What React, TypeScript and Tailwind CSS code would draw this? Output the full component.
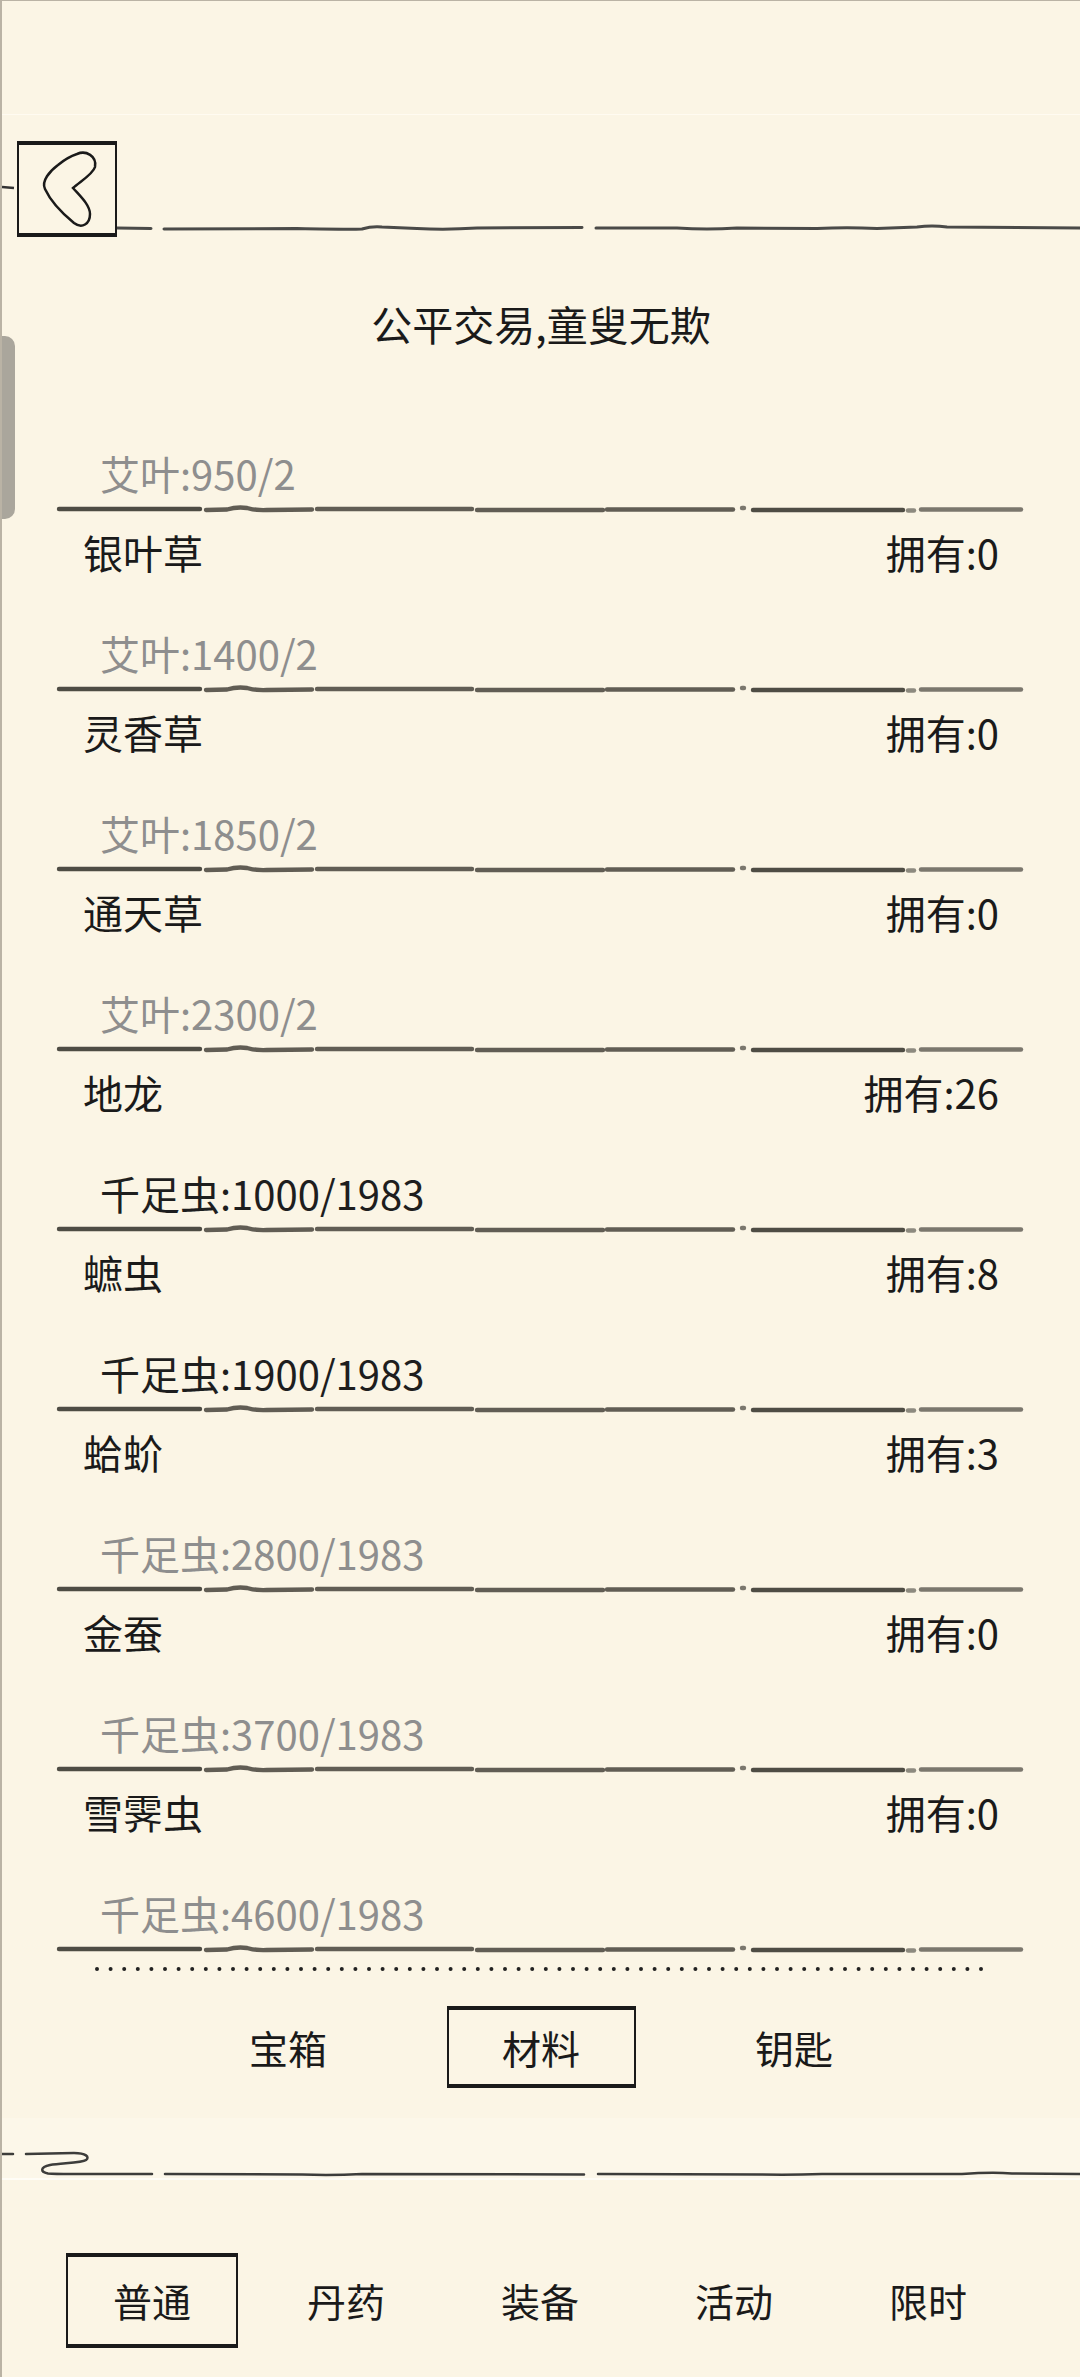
import type { ReactNode } from "react";

type Item = {
  name: string;
  owned: number;
  price: string;
  affordable: boolean;
};

const items: Item[] = [
  { name: "银叶草", owned: 0, price: "艾叶:1400/2", affordable: false },
  { name: "灵香草", owned: 0, price: "艾叶:1850/2", affordable: false },
  { name: "通天草", owned: 0, price: "艾叶:2300/2", affordable: false },
  { name: "地龙", owned: 26, price: "千足虫:1000/1983", affordable: true },
  { name: "蟅虫", owned: 8, price: "千足虫:1900/1983", affordable: true },
  { name: "蛤蚧", owned: 3, price: "千足虫:2800/1983", affordable: false },
  { name: "金蚕", owned: 0, price: "千足虫:3700/1983", affordable: false },
  { name: "雪霁虫", owned: 0, price: "千足虫:4600/1983", affordable: false },
];

// brush-stroke divider under every price line
function Divider() {
  return (
    <svg width="970" height="10" viewBox="0 0 970 10" className="block -my-[1px] blur-[0.7px]">
      <g fill="none" stroke="#45423b" strokeWidth="4.4" strokeLinecap="round">
        <path d="M4 5 L145 5" strokeOpacity="0.95" />
        <path d="M151 6 L172 5.5 Q182 2.5 192 4 Q200 6.5 212 6 L257 5.5" strokeOpacity="0.85" />
        <path d="M262 5 L417 5" strokeOpacity="0.85" />
        <path d="M422 6 L548 6" strokeOpacity="0.85" />
        <path d="M552 5.5 L678 5.5" strokeOpacity="0.85" />
        <path d="M687 4 L689 4" strokeOpacity="0.7" />
        <path d="M698 6 L848 6" strokeOpacity="0.95" />
        <path d="M853 6.5 L859 6.5" strokeOpacity="0.6" />
        <path d="M866 5.5 L966 5.5" strokeOpacity="0.7" />
      </g>
    </svg>
  );
}

function PriceLabel({ text, affordable }: { text: string; affordable: boolean }) {
  return (
    <div className="h-[90px] flex items-end pb-[12px] pl-[45px]">
      <span className={`text-[40px] leading-[40px] ${affordable ? "text-[#1e1e1e]" : "text-[#8e8e8e]"}`}>
        {text}
      </span>
    </div>
  );
}

function SketchBox({ children, className }: { children: ReactNode; className: string }) {
  return (
    <div
      className={`flex items-center justify-center border-2 border-t-[4px] border-b-[4px] border-[#1a1a1a] ${className}`}
    >
      {children}
    </div>
  );
}

export default function App() {
  return (
    <div className="relative w-[1080px] min-h-[2377px] bg-[#fbf5e5] border-t border-l-2 border-[#bab3a5] font-['Noto_Sans_CJK_SC','Noto_Sans',sans-serif] text-[#1a1a1a] overflow-hidden">
      {/* status bar area */}
      <div className="h-[113px]" />
      <div className="h-px bg-[#fffbf1]" />

      {/* header with back button */}
      <div className="flex items-start pt-[26px] h-[131px]">
        <svg width="15" height="96" viewBox="0 0 15 96" className="block">
          <path d="M0 46 L12 47" stroke="#333" strokeWidth="2.5" fill="none" />
        </svg>
        <SketchBox className="w-[100px] h-[96px] border-b-[3px]">
          <svg width="96" height="90" viewBox="0 0 96 90" className="block -mt-[4px]">
            <path
              d="M58 12 C67 8 78 14 76 25 C74 32 62 39 54 46 C61 54 71 63 71 72 C71 82 63 87 55 81 C44 72 32 60 26 47 C22 39 31 29 39 23 C45 18 52 14 58 12 Z"
              fill="none"
              stroke="#1a1a1a"
              strokeWidth="2.5"
            />
          </svg>
        </SketchBox>
        <svg width="963" height="96" viewBox="0 0 963 96" className="block">
          <g fill="none" stroke="#4a4a48" strokeWidth="3" strokeLinecap="round">
            <path d="M0 87 L34 87.5" />
            <path d="M47 88 L180 87.5 Q230 88.5 245 88 Q255 85 265 86 L300 87.5 Q330 89 360 87 L465 86.5" />
            <path d="M479 87 L560 87 Q590 89 620 87 L700 87.5 Q730 86 760 87.5 L800 86 Q815 84 830 86 L963 87" />
          </g>
        </svg>
      </div>

      {/* title */}
      <div className="mt-[53px] h-[48px] leading-[48px] text-center text-[41px]">公平交易,童叟无欺</div>

      {/* item list */}
      <div className="mt-[68px] ml-[53px] w-[970px]">
        <PriceLabel text="艾叶:950/2" affordable={false} />
        {items.map((item) => (
          <div key={item.name}>
            <Divider />
            <div className="h-[82px] flex items-center justify-between pl-[28px] pr-[26px] pb-[5px] text-[40px] leading-[48px]">
              <span>{item.name}</span>
              <span>拥有:{item.owned}</span>
            </div>
            <PriceLabel text={item.price} affordable={item.affordable} />
          </div>
        ))}
        <Divider />
      </div>

      {/* dotted separator */}
      <svg width="900" height="8" viewBox="0 0 900 8" className="block mt-[12px] ml-[92px]">
        <line
          x1="3"
          y1="4"
          x2="895"
          y2="4"
          stroke="#222"
          strokeWidth="4"
          strokeLinecap="round"
          strokeDasharray="0 13.6"
        />
      </svg>

      {/* category tabs */}
      <div className="mt-[33px] flex justify-center text-[39px]">
        <div className="w-[253px] h-[82px] flex items-center justify-center">宝箱</div>
        <div className="w-[253px] h-[82px] flex items-center justify-center">
          <SketchBox className="w-[189px] h-[82px] border-t-[3px]">材料</SketchBox>
        </div>
        <div className="w-[253px] h-[82px] flex items-center justify-center">钥匙</div>
      </div>

      {/* wave line */}
      <div className="mt-[30px] h-[60px] bg-[#fcf7e9]" />
      <svg width="1080" height="30" viewBox="0 0 1080 30" className="block -mt-[30px]">
        <g fill="none" stroke="#3d3d3b" strokeWidth="2.5" strokeLinecap="round">
          <path d="M0 6 L11 6" />
          <path d="M24 6 L72 5 C84 5 88 9 84 12 C80 15 60 15 48 17 C38 19 38 24 46 25.5 C52 26 60 26 70 26 L150 26" />
          <path d="M163 26 L300 26.5 Q330 27.5 360 26 L582 26.5" />
          <path d="M596 26 L760 26.5 Q790 27 820 26 L960 26 Q990 24 1010 25.5 L1080 26" />
        </g>
      </svg>
      <div className="h-[2px] bg-[#fffdf6]" />

      {/* bottom navigation */}
      <div className="mt-[73px] ml-[53px] w-[970px] grid grid-cols-5 text-[39px]">
        <div className="h-[95px] flex items-center justify-center">
          <SketchBox className="w-[172px] h-[95px]">普通</SketchBox>
        </div>
        <div className="h-[95px] flex items-center justify-center">丹药</div>
        <div className="h-[95px] flex items-center justify-center">装备</div>
        <div className="h-[95px] flex items-center justify-center">活动</div>
        <div className="h-[95px] flex items-center justify-center">限时</div>
      </div>

      {/* scroll handle on left edge */}
      <div className="absolute left-0 top-[335px] w-[13px] h-[183px] bg-[#aaa69c] rounded-r-[10px]" />
    </div>
  );
}
